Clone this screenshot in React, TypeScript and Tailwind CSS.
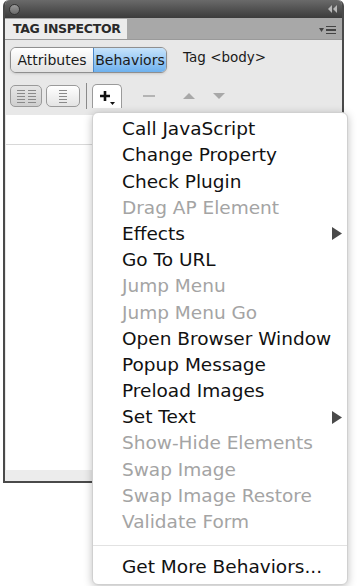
import React from 'react'

const font = { fontFamily: '"DejaVu Sans", "Liberation Sans", sans-serif' }

type Item = { label: string; off?: boolean; sub?: boolean }

const items: Item[] = [
  { label: 'Call JavaScript' },
  { label: 'Change Property' },
  { label: 'Check Plugin' },
  { label: 'Drag AP Element', off: true },
  { label: 'Effects', sub: true },
  { label: 'Go To URL' },
  { label: 'Jump Menu', off: true },
  { label: 'Jump Menu Go', off: true },
  { label: 'Open Browser Window' },
  { label: 'Popup Message' },
  { label: 'Preload Images' },
  { label: 'Set Text', sub: true },
  { label: 'Show-Hide Elements', off: true },
  { label: 'Swap Image', off: true },
  { label: 'Swap Image Restore', off: true },
  { label: 'Validate Form', off: true },
]

const Lines = ({ cols }: { cols: number }) => (
  <div className="flex gap-[3px]">
    {Array.from({ length: cols }).map((_, c) => (
      <div key={c} className="flex flex-col gap-[2px]">
        {[0, 1, 2, 3, 4].map((i) => (
          <div key={i} className="w-[8px] h-[1px] bg-[#8a8a8a]" />
        ))}
      </div>
    ))}
  </div>
)

const App = () => {
  return (
    <div className="relative w-[360px] h-[586px] bg-white overflow-hidden" style={font}>
      {/* panel window */}
      <div className="ml-[3px] w-[341px] h-[483px] flex flex-col rounded-t-[6px] border-x-[2px] border-b-[2px] border-[#4a4a4a] bg-[#e8e8e8]">
        <div className="h-[18px] shrink-0 flex items-center justify-between px-[4px] rounded-t-[5px] bg-gradient-to-b from-[#6a6a6a] to-[#3c3c3c]">
          <div className="w-[11px] h-[11px] rounded-full bg-gradient-to-b from-[#9a9a9a] to-[#6a6a6a] border border-[#333]" />
          <svg width="10" height="8" viewBox="0 0 10 8">
            <path d="M0 4 L4 0 L4 8 Z M5 4 L9 0 L9 8 Z" fill="#b8b8b8" />
          </svg>
        </div>
        <div className="h-[22px] shrink-0 flex items-end justify-between bg-[#a8a8a8] border-b border-[#9a9a9a]">
          <div className="h-[20px] w-[122px] bg-[#ececec] flex items-center pl-[8px] text-[12.5px] font-bold text-[#2a2a2a] tracking-tight">
            TAG INSPECTOR
          </div>
          <div className="flex items-center gap-[2px] pr-[6px] pb-[5px]">
            <svg width="5" height="4" viewBox="0 0 5 4">
              <path d="M0 0 L5 0 L2.5 4 Z" fill="#444" />
            </svg>
            <div className="flex flex-col gap-[2px]">
              <div className="w-[10px] h-[1.5px] bg-[#444]" />
              <div className="w-[10px] h-[1.5px] bg-[#444]" />
              <div className="w-[10px] h-[1.5px] bg-[#444]" />
            </div>
          </div>
        </div>

        <div className="flex items-center pt-[7px] pl-[5px] gap-[16px]">
          <div className="flex h-[26px] rounded-[6px] border border-[#8f8f8f] overflow-hidden text-[14px] text-[#1a1a1a] shadow-sm">
            <div className="w-[82px] flex items-center justify-center bg-gradient-to-b from-white to-[#e2e2e2]">Attributes</div>
            <div className="w-[73px] flex items-center justify-center bg-gradient-to-b from-[#c6e3fb] to-[#6eb1ee] border-l border-[#4c88c8]">Behaviors</div>
          </div>
          <div className="text-[13.5px] text-[#1a1a1a] -mt-[6px]">Tag &lt;body&gt;</div>
        </div>

        <div className="flex items-center h-[26px] mt-[10px] pl-[5px]">
          <div className="w-[32px] h-[22px] rounded-[5px] border border-[#9a9a9a] bg-gradient-to-b from-[#e6e6e6] to-[#cfcfcf] flex items-center justify-center">
            <Lines cols={2} />
          </div>
          <div className="ml-[4px] w-[34px] h-[22px] rounded-[5px] border border-[#9a9a9a] bg-gradient-to-b from-white to-[#e4e4e4] flex items-center justify-center">
            <Lines cols={1} />
          </div>
          <div className="ml-[6px] w-[1px] h-[26px] bg-[#8a8a8a]" />
          <div className="ml-[5px] w-[30px] h-[24px] rounded-t-[5px] border border-b-0 border-[#9a9a9a] bg-white relative">
            <svg className="absolute left-[7px] top-[5px]" width="16" height="16" viewBox="0 0 16 16">
              <path d="M5 1 V11 M0 6 H10" stroke="#111" strokeWidth="2.6" />
              <path d="M10 12 L15 12 L12.5 15 Z" fill="#111" />
            </svg>
          </div>
          <div className="ml-[21px] w-[12px] h-[2px] bg-[#b4b4b4]" />
          <svg className="ml-[28px]" width="12" height="8" viewBox="0 0 12 8">
            <path d="M0 7 L6 1 L12 7 Z" fill="#a8a8a8" />
          </svg>
          <svg className="ml-[18px]" width="12" height="8" viewBox="0 0 12 8">
            <path d="M0 1 L12 1 L6 7 Z" fill="#a8a8a8" />
          </svg>
        </div>

        <div className="flex-1 mt-[6px] mx-[1px] flex flex-col bg-white">
          <div className="h-[30px] border-b border-[#d8d8d8]" />
          <div className="flex-1" />
        </div>
        <div className="h-[11px] shrink-0 bg-[#ececec]" />
      </div>

      {/* dropdown menu */}
      <div className="absolute left-[92px] top-[112px] w-[256px] h-[473px] bg-white rounded-[6px] border border-[#d0d0d0] shadow-[0_2px_8px_rgba(0,0,0,0.25)] pt-[3px] flex flex-col">
        {items.map((it) => (
          <div
            key={it.label}
            className={`h-[26.2px] flex items-center justify-between pl-[29px] pr-[5px] text-[18.5px] ${it.off ? 'text-[#a4a4a4]' : 'text-[#111]'}`}
          >
            <span>{it.label}</span>
            {it.sub && (
              <svg width="10" height="13" viewBox="0 0 10 13">
                <path d="M0 0 L10 6.5 L0 13 Z" fill="#4a4a4a" />
              </svg>
            )}
          </div>
        ))}
        <div className="mt-[10px] mb-[8px] h-[1px] bg-[#e2e2e2]" />
        <div className="h-[26px] flex items-center pl-[29px] text-[18.5px] text-[#111]">Get More Behaviors...</div>
      </div>
    </div>
  )
}

export default App
